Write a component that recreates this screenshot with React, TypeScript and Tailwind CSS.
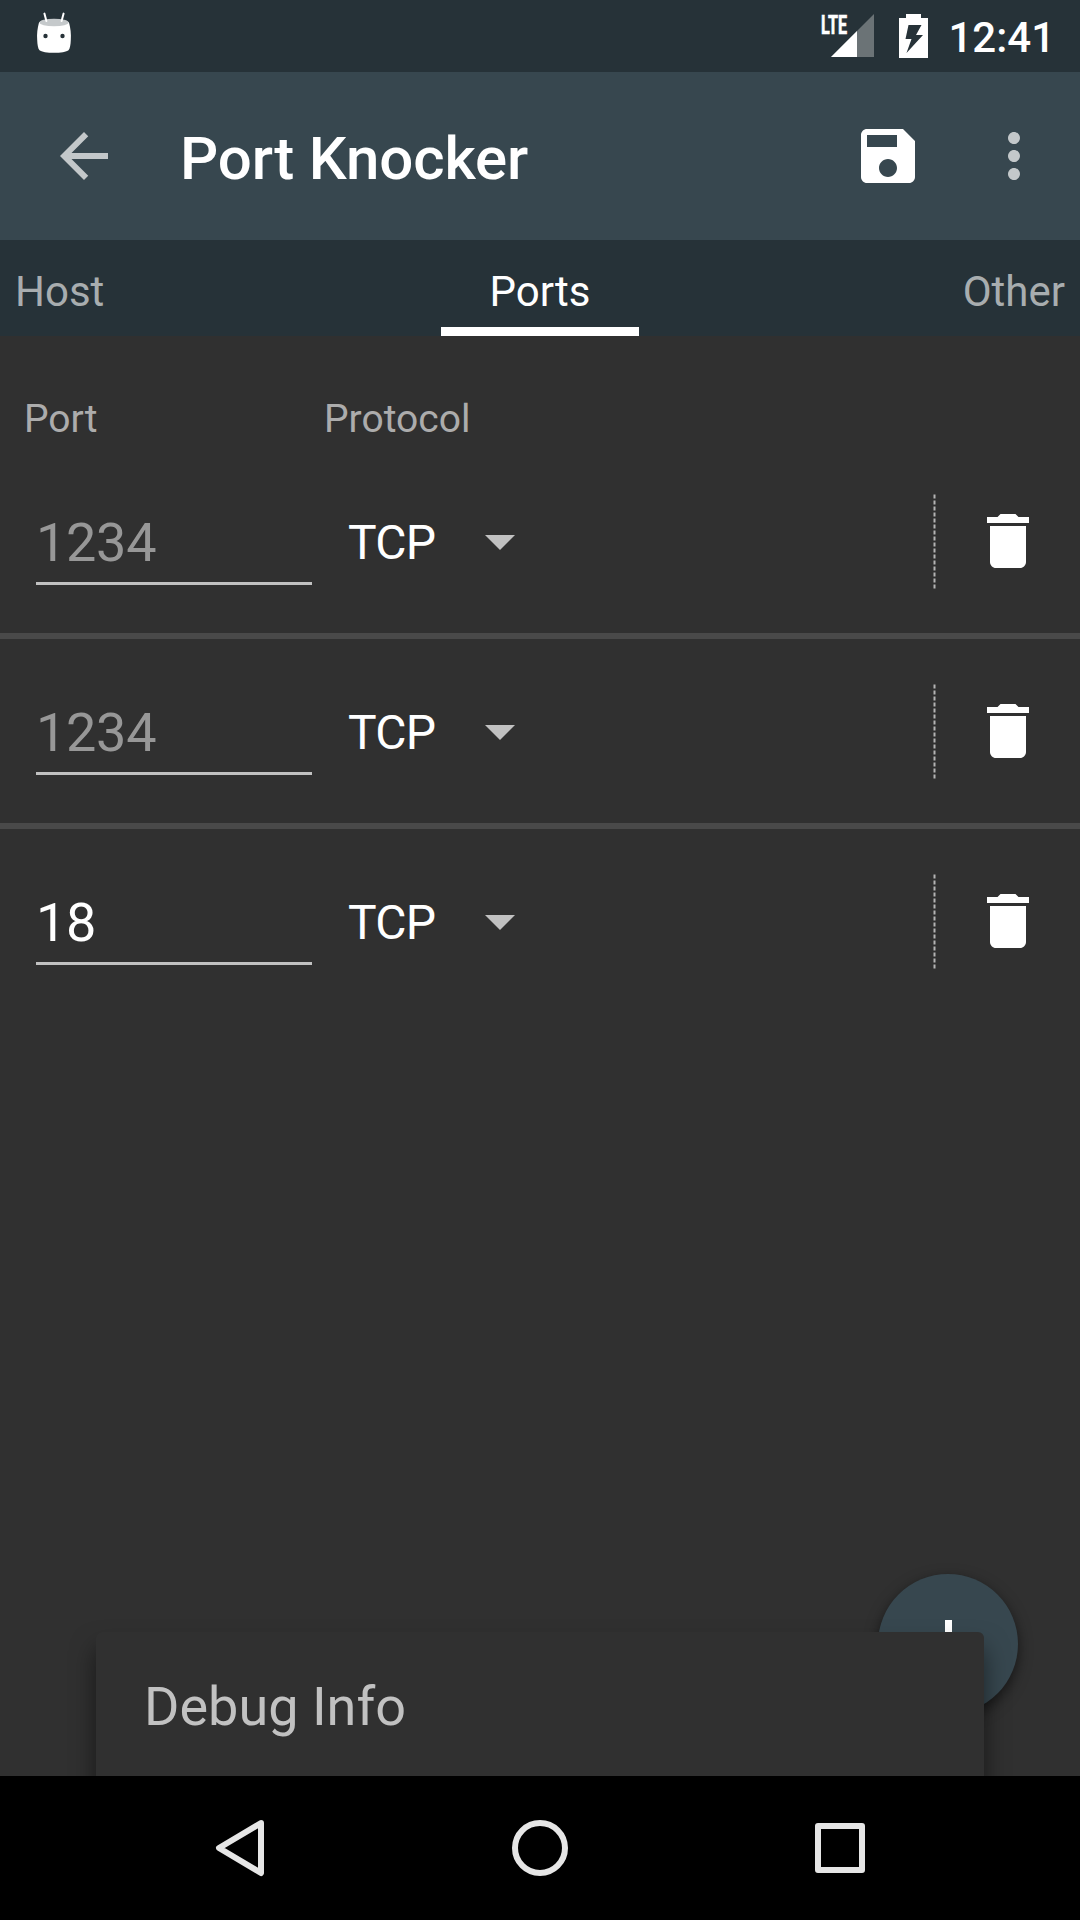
import type { ReactNode } from "react";

function Icon({ d, className }: { d: string; className: string }) {
  return (
    <svg viewBox="0 0 24 24" className={"size-[72px] shrink-0 " + className} fill="currentColor">
      <path d={d} />
    </svg>
  );
}

const ICONS = {
  back: "M20 11H7.83l5.59-5.59L12 4l-8 8 8 8 1.41-1.41L7.83 13H20v-2z",
  save: "M17 3H5c-1.11 0-2 .9-2 2v14c0 1.1.89 2 2 2h14c1.1 0 2-.9 2-2V7l-4-4zm-5 16c-1.66 0-3-1.34-3-3s1.34-3 3-3 3 1.34 3 3-1.34 3-3 3zm3-10H5V5h10v4z",
  more: "M12 8c1.1 0 2-.9 2-2s-.9-2-2-2-2 .9-2 2 .9 2 2 2zm0 2c-1.1 0-2 .9-2 2s.9 2 2 2 2-.9 2-2-.9-2-2-2zm0 6c-1.1 0-2 .9-2 2s.9 2 2 2 2-.9 2-2-.9-2-2-2z",
  trash: "M6 19c0 1.1.9 2 2 2h8c1.1 0 2-.9 2-2V7H6v12zM19 4h-3.5l-1-1h-5l-1 1H5v2h14V4z",
};

function StatusBar() {
  return (
    <header className="flex h-[72px] items-start bg-[#263238] text-white">
      <svg viewBox="0 0 36 48" className="ml-9 mt-2 h-12 w-9">
        <path d="M3 14.5C3 12 33 12 33 14.5C34.5 20 35.3 26 34.8 32C34.6 37 34 40.5 32.5 42.3C29 45.7 7 45.7 3.5 42.3C2 40.5 1.4 37 1.2 32C.7 26 1.5 20 3 14.5Z" fill="#fff" />
        <ellipse cx="18" cy="14.5" rx="14.6" ry="3.8" fill="#c5c9cb" />
        <path d="M8.4 5.6L10.4 13M27.6 5.6L25.6 13" stroke="#fff" strokeWidth="2" strokeLinecap="round" />
        <circle cx="9.5" cy="28" r="2.2" fill="#263238" />
        <circle cx="26.5" cy="28" r="2.2" fill="#263238" />
      </svg>
      <div className="relative ml-auto h-[72px] w-[56px]">
        <svg viewBox="0 0 56 72" className="h-[72px] w-[56px]">
          <path d="M11 57L54 14V57Z" fill="#6b7376" />
          <path d="M11 57L37 31V57Z" fill="#fff" />
        </svg>
        <span className="absolute left-[1px] top-[12px] origin-left scale-x-[0.62] text-[26px] leading-[27px] font-bold [-webkit-text-stroke:0.7px_white]">LTE</span>
      </div>
      <svg viewBox="0 0 30 72" className="ml-[22px] h-[72px] w-[30px]">
        <path d="M8 14H23V18H30V58H1V18H8Z" fill="#fff" />
        <path d="M10.5 25H23.5L18 35H25L8.5 53L13.5 39H7.5Z" fill="#263238" />
      </svg>
      <span className="ml-[20px] mr-[25px] mt-[13px] text-[42px] leading-[49px] font-medium">12:41</span>
    </header>
  );
}

function Tab({ children, className }: { children: ReactNode; className: string }) {
  return <div className={"flex flex-1 pt-[4px] leading-[96px] " + className}>{children}</div>;
}

function PortRow({ value }: { value?: string }) {
  return (
    <div className="flex h-[190px] items-start">
      <div className="ml-9 mt-[60px] h-[76px] w-[276px] border-b-[3px] border-[#c1c1c1] pt-px text-[54px] leading-[66px] tracking-[-0.3px]">
        <span className={value ? "text-white" : "text-[#979797]"}>{value ?? "1234"}</span>
      </div>
      <div className="ml-9 mt-[61px] w-[137px] text-[48px] leading-[66px] tracking-[-0.8px] text-white">TCP</div>
      <svg viewBox="0 0 30 15" className="mt-[86px] h-[15px] w-[30px]">
        <path d="M0 0H30L15 15Z" fill="#c1c1c1" />
      </svg>
      <svg viewBox="0 0 3 95" className="ml-auto mt-[45px] h-[95px] w-[3px]">
        <path d="M1.5 .5V95" stroke="#b4b4b4" strokeWidth="2" strokeDasharray="4 2" />
      </svg>
      <Icon d={ICONS.trash} className="ml-9 mr-9 mt-14 text-white" />
    </div>
  );
}

export default function App() {
  return (
    <div className="flex h-[1920px] w-[1080px] flex-col overflow-hidden bg-[#303030] font-['Roboto',sans-serif]">
      <StatusBar />
      <div className="flex h-[168px] items-center bg-[#37474f]">
        <Icon d={ICONS.back} className="ml-12 text-[#c3c8ca]" />
        <h1 className="ml-[60px] pt-[6px] text-[60px] leading-[72px] font-medium tracking-[-0.15px] text-white">Port Knocker</h1>
        <Icon d={ICONS.save} className="ml-auto mr-[54px] text-white" />
        <Icon d={ICONS.more} className="mr-[30px] text-[#c3c8ca]" />
      </div>
      <nav className="flex h-24 bg-[#263238] text-[42px] text-[#a8adaf]">
        <Tab className="pl-[15px]">Host</Tab>
        <div className="h-24 w-[198px] border-b-[9px] border-white pt-[4px] text-center leading-[96px] text-white">Ports</div>
        <Tab className="justify-end pr-[15px]">Other</Tab>
      </nav>
      <main className="relative flex flex-1 flex-col overflow-hidden">
        <div className="flex h-[113px] items-start pt-[60px] text-[39px] leading-[46px] text-[#acacac]">
          <span className="ml-6 w-[300px]">Port</span>
          <span>Protocol</span>
        </div>
        <div className="divide-y-[6px] divide-[#494949]">
          <PortRow />
          <PortRow />
          <PortRow value="18" />
        </div>
        <button className="absolute left-[878px] top-[1238px] flex size-[140px] items-center justify-center rounded-full bg-[#37474f] shadow-[0_5px_14px_rgba(0,0,0,0.55)]">
          <svg viewBox="0 0 50 50" className="size-[50px]">
            <path d="M25.5 1V49M1 25H49" stroke="#fff" strokeWidth="7" />
          </svg>
        </button>
        <div className="absolute left-24 top-[1296px] h-[240px] w-[888px] rounded-[6px] bg-[#303030] pl-12 pt-[43px] text-[54px] leading-[64px] text-[#c1c1c1] shadow-[0_16px_24px_rgba(0,0,0,0.5)]">
          Debug Info
        </div>
      </main>
      <footer className="flex h-36 items-center justify-center gap-[228px] bg-black">
        <svg viewBox="0 0 72 72" className="size-[72px]" fill="none" stroke="#e6e6e6" strokeWidth="6" strokeLinejoin="round">
          <path d="M57 11L15 36L57 61Z" />
        </svg>
        <svg viewBox="0 0 72 72" className="size-[72px]" fill="none" stroke="#e6e6e6" strokeWidth="6">
          <circle cx="36" cy="36" r="25" />
        </svg>
        <svg viewBox="0 0 72 72" className="size-[72px]" fill="none" stroke="#e6e6e6" strokeWidth="6" strokeLinejoin="round">
          <rect x="14" y="14" width="44" height="44" />
        </svg>
      </footer>
    </div>
  );
}
